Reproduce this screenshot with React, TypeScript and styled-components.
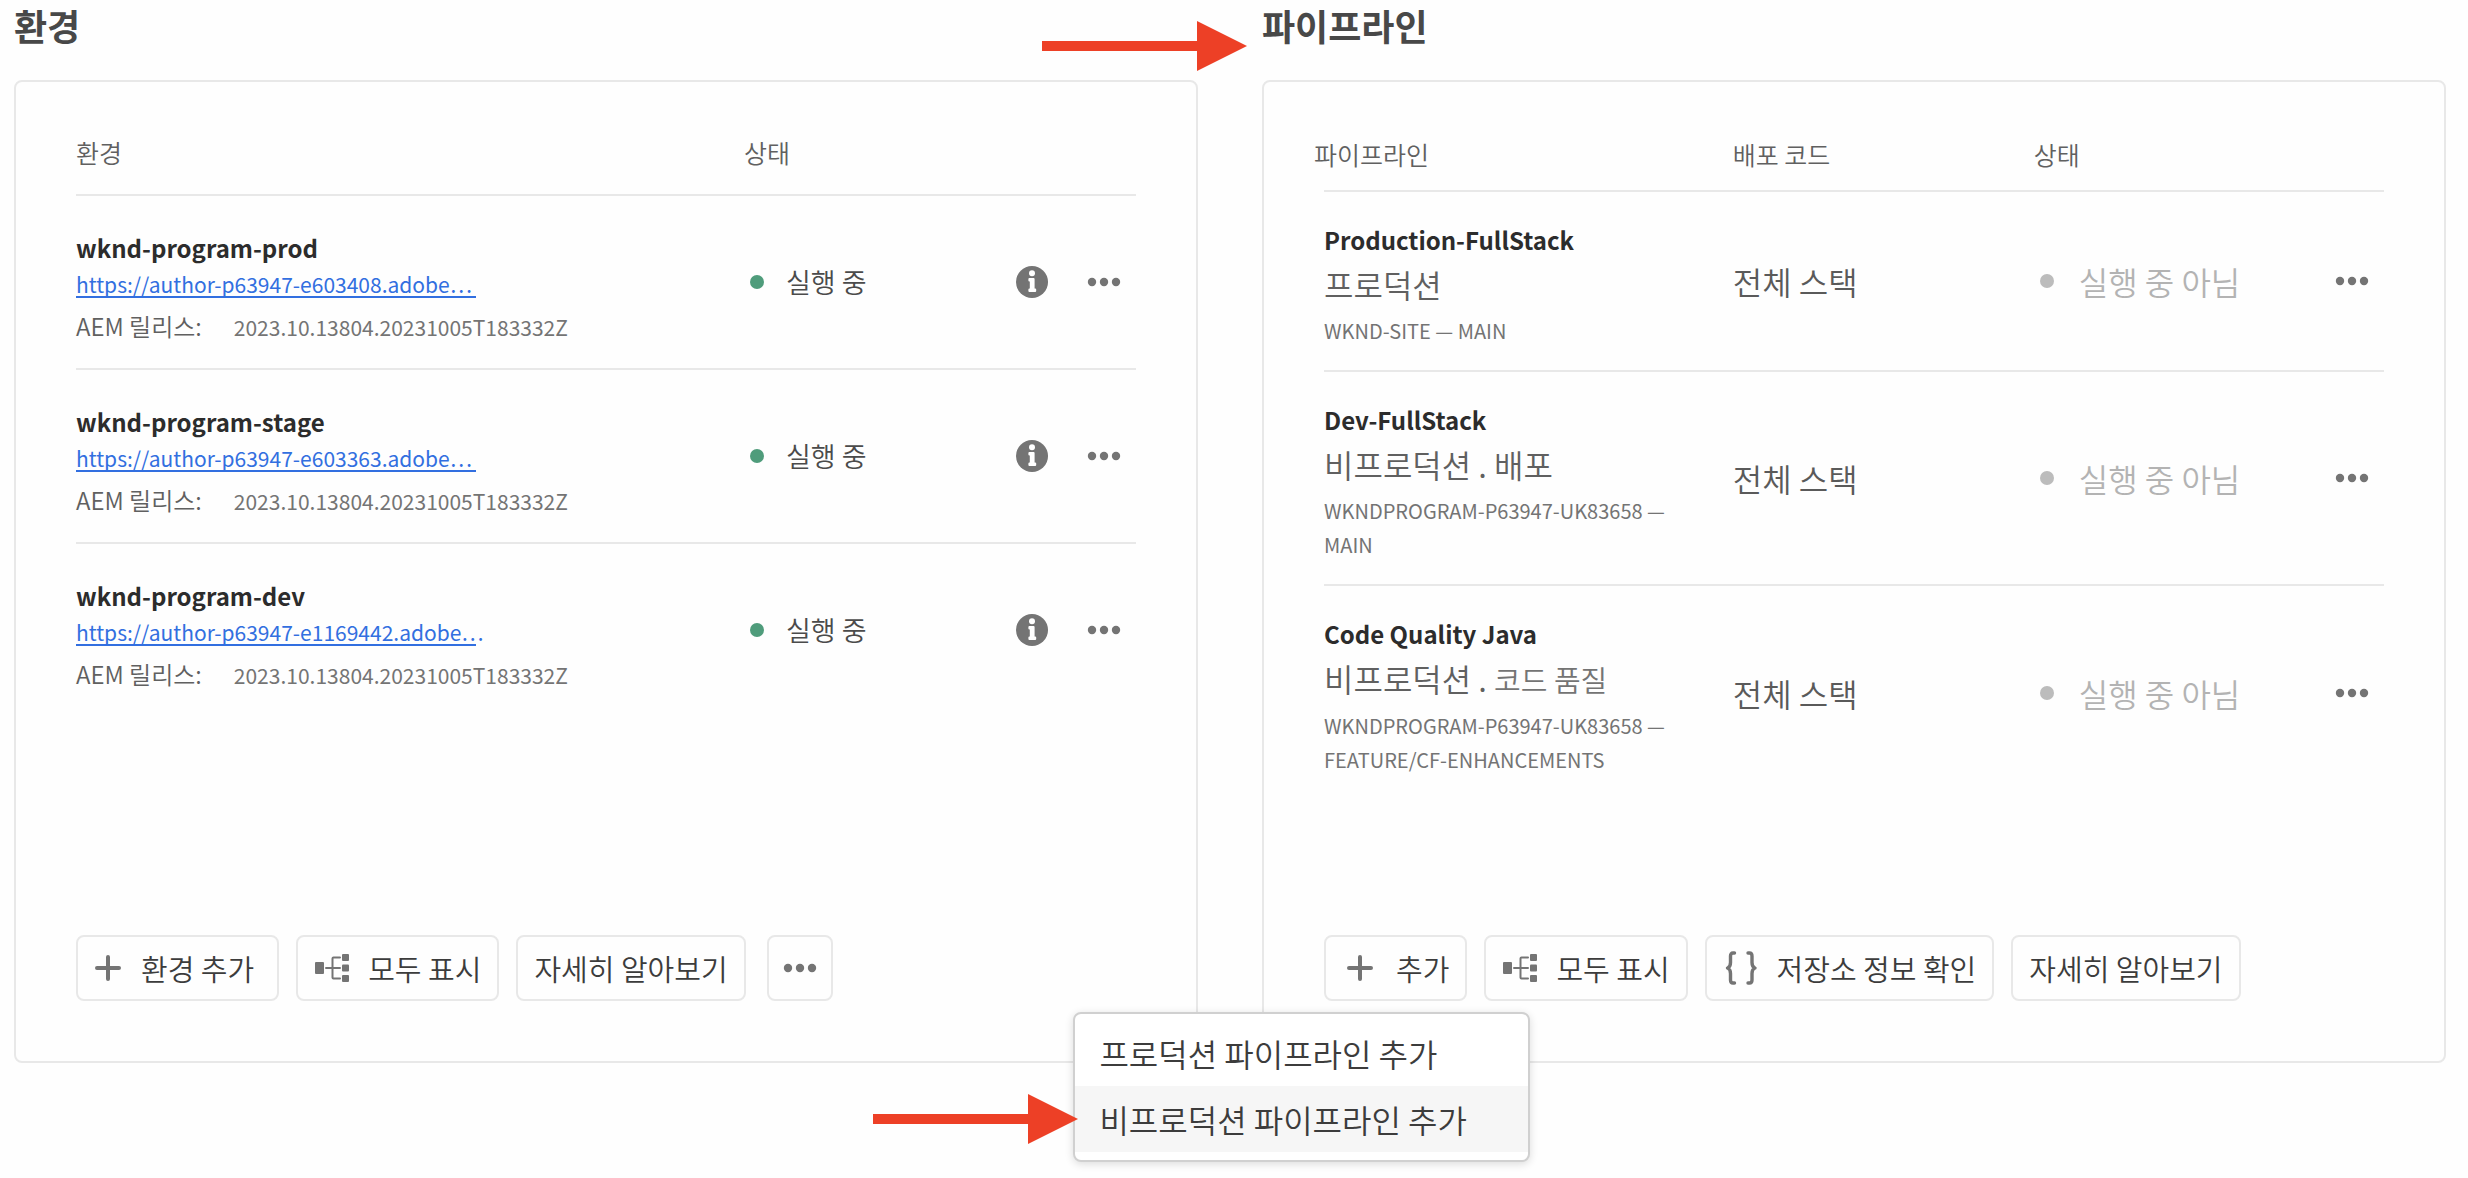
import React from 'react';
import styled, { createGlobalStyle } from 'styled-components';

const GlobalStyle = createGlobalStyle`
  *, *::before, *::after { box-sizing: border-box; }
  body {
    margin: 0;
    background: #fefefe;
    color: #4b4b4b;
    font-family: "Noto Sans CJK KR", "Noto Sans", sans-serif;
  }
`;

const Page = styled.main`
  display: grid;
  grid-template-columns: repeat(2, minmax(0, 1fr));
  align-content: start;
  gap: 64px;
  min-height: 100vh;
  padding: 0 22px 24px 14px;
`;

const Section = styled.section`
  position: relative;
  display: flex;
  flex-direction: column;
`;

const Heading = styled.h2`
  margin: 0 0 30px;
  font-size: 36px;
  line-height: 50px;
  font-weight: 700;
  color: #484848;
`;

const Card = styled.div`
  flex: 1;
  display: flex;
  flex-direction: column;
  padding: 48px 60px 60px;
  border: 2px solid #e8e8e8;
  border-radius: 8px;
`;

const Table = styled.table`
  width: 100%;
  table-layout: fixed;
  border-spacing: 0;
  margin-bottom: 136px;
`;

const HeadCell = styled.th<{ $width?: string; $tight?: boolean; $outdent?: boolean }>`
  width: ${(p) => p.$width ?? 'auto'};
  padding: ${(p) => (p.$tight ? '2px 0 14px' : '0 0 20px')};
  text-indent: ${(p) => (p.$outdent ? '-10px' : '0')};
  border-bottom: 2px solid #e8e8e8;
  text-align: left;
  font-size: 25px;
  line-height: 44px;
  font-weight: 350;
  color: #606060;
`;

const Row = styled.tr`
  &:last-child > td { border-bottom: 0; }
`;

const Cell = styled.td<{ $center?: boolean }>`
  padding: 0;
  border-bottom: 2px solid #e8e8e8;
  vertical-align: middle;
  text-align: ${(p) => (p.$center ? 'center' : 'left')};
`;

const EnvironmentBody = styled.div`
  padding: 34px 0 24px;
`;

const PipelineBody = styled.div`
  padding: 30px 0 22px;
`;

const Name = styled.div`
  font-size: 24px;
  line-height: 36px;
  font-weight: 700;
  color: #2c2c2c;
`;

const AuthorLink = styled.a`
  display: block;
  width: 400px;
  max-width: 100%;
  margin-top: 6px;
  border-bottom: 2px solid #326fe0;
  font-size: 21px;
  line-height: 24px;
  color: #326fe0;
  text-decoration: none;
  white-space: nowrap;
`;

const Release = styled.div`
  display: flex;
  align-items: baseline;
  gap: 32px;
  margin-top: 10px;
  font-size: 24px;
  line-height: 36px;
  font-weight: 350;
  color: #606060;
`;

const Version = styled.span`
  font-size: 21px;
  line-height: 30px;
  font-weight: 400;
  color: #747474;
`;

const Kind = styled.div`
  margin-top: 4px;
  font-size: 32px;
  line-height: 44px;
  font-weight: 350;
  color: #606060;
`;

const KindDetail = styled.span`
  font-size: 29px;
  color: #747474;
`;

const Branch = styled.div`
  width: 360px;
  max-width: 100%;
  margin-top: 8px;
  font-size: 20px;
  line-height: 34px;
  color: #747474;
`;

const DeployCode = styled.span`
  font-size: 32px;
  line-height: 44px;
  font-weight: 350;
  color: #5a5a5a;
`;

const Status = styled.div<{ $running?: boolean }>`
  display: flex;
  align-items: center;
  gap: ${(p) => (p.$running ? 22 : 25)}px;
  padding-left: 6px;
  white-space: nowrap;
  font-size: ${(p) => (p.$running ? 27 : 32)}px;
  line-height: 44px;
  font-weight: 350;
  color: ${(p) => (p.$running ? '#4b4b4b' : '#b3b3b3')};

  &::before {
    content: '';
    width: 14px;
    height: 14px;
    border-radius: 50%;
    background: ${(p) => (p.$running ? '#4f9c7b' : '#bcbcbc')};
  }
`;

const IconButton = styled.button`
  display: inline-flex;
  align-items: center;
  justify-content: center;
  width: 64px;
  height: 64px;
  padding: 0;
  border: 0;
  background: none;
  color: #747474;
  vertical-align: middle;
`;

const Footer = styled.div`
  display: flex;
  gap: 17px;
  margin-top: auto;
`;

const Action = styled.button<{ $square?: boolean; $roomy?: boolean }>`
  display: flex;
  align-items: center;
  justify-content: center;
  gap: ${(p) => (p.$roomy ? 20 : 18)}px;
  padding: ${(p) => (p.$square ? '10px 14px' : p.$roomy ? '10px 23px 10px 17px' : '10px 16px')};
  margin-left: ${(p) => (p.$square ? 4 : 0)}px;
  min-width: 66px;
  min-height: 66px;
  border: 2px solid #e8e8e8;
  border-radius: 8px;
  background: #fefefe;
  font-family: inherit;
  font-size: 29px;
  line-height: 42px;
  font-weight: 350;
  white-space: nowrap;
  color: #3c3c3c;

  svg { flex: none; color: #747474; }
`;

const MenuAnchor = styled.div`
  position: relative;
`;

const Menu = styled.div`
  position: absolute;
  z-index: 1;
  top: calc(100% + 11px);
  right: -63px;
  width: 457px;
  padding: 6px 0 8px;
  border: 2px solid #d0d0d0;
  border-radius: 8px;
  background: #ffffff;
  box-shadow: 0 2px 8px rgba(0, 0, 0, 0.14);
`;

const MenuItem = styled.button<{ $active?: boolean }>`
  display: block;
  width: 100%;
  padding: 0 24px;
  border: 0;
  background: ${(p) => (p.$active ? '#f6f6f6' : 'transparent')};
  text-align: left;
  font-family: inherit;
  font-size: 32px;
  line-height: 66px;
  font-weight: 350;
  color: #3c3c3c;
`;

const HeadingArrow = styled.div`
  position: absolute;
  top: 21px;
  right: calc(100% + 15px);
  height: 50px;
`;

const MenuArrow = styled.div`
  position: absolute;
  top: 80px;
  right: calc(100% - 3px);
  height: 50px;
`;

const Arrow = () => (
  <svg width="205" height="50" viewBox="0 0 205 50" aria-hidden="true">
    <path d="M0 20H155V0L205 25L155 50V30H0Z" fill="#ed4026" />
  </svg>
);

const DotsIcon = () => (
  <svg width="34" height="10" viewBox="0 0 34 10" fill="currentColor" aria-hidden="true">
    <circle cx="5" cy="5" r="4.2" />
    <circle cx="17" cy="5" r="4.2" />
    <circle cx="29" cy="5" r="4.2" />
  </svg>
);

const InfoIcon = () => (
  <svg width="32" height="32" viewBox="0 0 32 32" aria-hidden="true">
    <circle cx="16" cy="16" r="16" fill="currentColor" />
    <circle cx="16" cy="7.2" r="3" fill="#fff" />
    <path
      d="M13.4 12h4.2a1 1 0 0 1 1 1v9.6h.6a1 1 0 0 1 1 1v1.4a1 1 0 0 1-1 1h-5.8a1 1 0 0 1-1-1v-1.4a1 1 0 0 1 1-1h.4v-7.2h-.4a1 1 0 0 1-1-1V13a1 1 0 0 1 1-1Z"
      fill="#fff"
    />
  </svg>
);

const PlusIcon = ({ width = 26 }: { width?: number }) => (
  <svg width={width} height="26" viewBox={`${13 - width / 2} 0 ${width} 26`} aria-hidden="true">
    <path d="M13 2v22M2 13h22" stroke="currentColor" strokeWidth="4" strokeLinecap="round" />
  </svg>
);

const TreeIcon = () => (
  <svg width="36" height="36" viewBox="0 0 36 36" aria-hidden="true">
    <g fill="currentColor">
      <rect x="1" y="12" width="9" height="12" rx="1" />
      <rect x="28" y="4" width="7" height="7" rx="1" />
      <rect x="28" y="14.500" width="7" height="7" rx="1" />
      <rect x="28" y="25" width="7" height="7" rx="1" />
    </g>
    <path
      d="M12 18h14M26 7.500h-6.500q-1 0-1 1v19q0 1 1 1h6.500"
      fill="none"
      stroke="currentColor"
      strokeWidth="2"
      strokeLinecap="round"
    />
  </svg>
);

const BracesIcon = () => (
  <svg width="36" height="36" viewBox="0 0 36 36" aria-hidden="true">
    <path
      d="M11.500 3H10Q7.500 3 7.500 6v6.500q0 4.500-3 5.500q3 1 3 5.500V30q0 3 2.500 3h1.500M25 3h1.500Q29 3 29 6v6.500q0 4.500 3 5.500q-3 1-3 5.500V30q0 3-2.500 3H25"
      fill="none"
      stroke="currentColor"
      strokeWidth="3.400"
      strokeLinecap="round"
      strokeLinejoin="round"
    />
  </svg>
);

const environments = [
  { name: 'wknd-program-prod', url: 'https://author-p63947-e603408.adobe…' },
  { name: 'wknd-program-stage', url: 'https://author-p63947-e603363.adobe…' },
  { name: 'wknd-program-dev', url: 'https://author-p63947-e1169442.adobe…' },
];

const pipelines = [
  { name: 'Production-FullStack', kind: <>프로덕션</>, branch: 'WKND-SITE — MAIN' },
  { name: 'Dev-FullStack', kind: <>비프로덕션 . 배포</>, branch: 'WKNDPROGRAM-P63947-UK83658 — MAIN' },
  {
    name: 'Code Quality Java',
    kind: <>비프로덕션 . <KindDetail>코드 품질</KindDetail></>,
    branch: 'WKNDPROGRAM-P63947-UK83658 — FEATURE/CF-ENHANCEMENTS',
  },
];

const Environments = () => (
  <Section>
    <Heading>환경</Heading>
    <Card>
      <Table>
        <thead>
          <tr>
            <HeadCell>환경</HeadCell>
            <HeadCell $width="23.4%">상태</HeadCell>
            <HeadCell $width="80px" aria-label="정보" />
            <HeadCell $width="64px" aria-label="작업" />
          </tr>
        </thead>
        <tbody>
          {environments.map((env) => (
            <Row key={env.name}>
              <Cell>
                <EnvironmentBody>
                  <Name>{env.name}</Name>
                  <AuthorLink href="#">{env.url}</AuthorLink>
                  <Release>
                    <span>AEM 릴리스:</span>
                    <Version>2023.10.13804.20231005T183332Z</Version>
                  </Release>
                </EnvironmentBody>
              </Cell>
              <Cell><Status $running>실행 중</Status></Cell>
              <Cell $center><IconButton aria-label="정보"><InfoIcon /></IconButton></Cell>
              <Cell $center><IconButton aria-label="더 보기"><DotsIcon /></IconButton></Cell>
            </Row>
          ))}
        </tbody>
      </Table>
      <Footer>
        <Action $roomy><PlusIcon />환경 추가</Action>
        <Action><TreeIcon />모두 표시</Action>
        <Action>자세히 알아보기</Action>
        <Action $square aria-label="더 보기"><DotsIcon /></Action>
      </Footer>
    </Card>
  </Section>
);

const Pipelines = () => (
  <Section>
    <HeadingArrow><Arrow /></HeadingArrow>
    <Heading>파이프라인</Heading>
    <Card>
      <Table>
        <thead>
          <tr>
            <HeadCell $tight $outdent>파이프라인</HeadCell>
            <HeadCell $tight $width="28.4%">배포 코드</HeadCell>
            <HeadCell $tight $width="27%">상태</HeadCell>
            <HeadCell $tight $width="64px" aria-label="작업" />
          </tr>
        </thead>
        <tbody>
          {pipelines.map((pipeline) => (
            <Row key={pipeline.name}>
              <Cell>
                <PipelineBody>
                  <Name>{pipeline.name}</Name>
                  <Kind>{pipeline.kind}</Kind>
                  <Branch>{pipeline.branch}</Branch>
                </PipelineBody>
              </Cell>
              <Cell><DeployCode>전체 스택</DeployCode></Cell>
              <Cell><Status>실행 중 아님</Status></Cell>
              <Cell $center><IconButton aria-label="더 보기"><DotsIcon /></IconButton></Cell>
            </Row>
          ))}
        </tbody>
      </Table>
      <Footer>
        <MenuAnchor>
          <Action aria-haspopup="menu" aria-expanded="true"><PlusIcon width={36} />추가</Action>
          <Menu role="menu">
            <MenuItem role="menuitem">프로덕션 파이프라인 추가</MenuItem>
            <MenuItem role="menuitem" $active>비프로덕션 파이프라인 추가</MenuItem>
            <MenuArrow><Arrow /></MenuArrow>
          </Menu>
        </MenuAnchor>
        <Action><TreeIcon />모두 표시</Action>
        <Action><BracesIcon />저장소 정보 확인</Action>
        <Action>자세히 알아보기</Action>
      </Footer>
    </Card>
  </Section>
);

export default function App() {
  return (
    <>
      <GlobalStyle />
      <Page>
        <Environments />
        <Pipelines />
      </Page>
    </>
  );
}
